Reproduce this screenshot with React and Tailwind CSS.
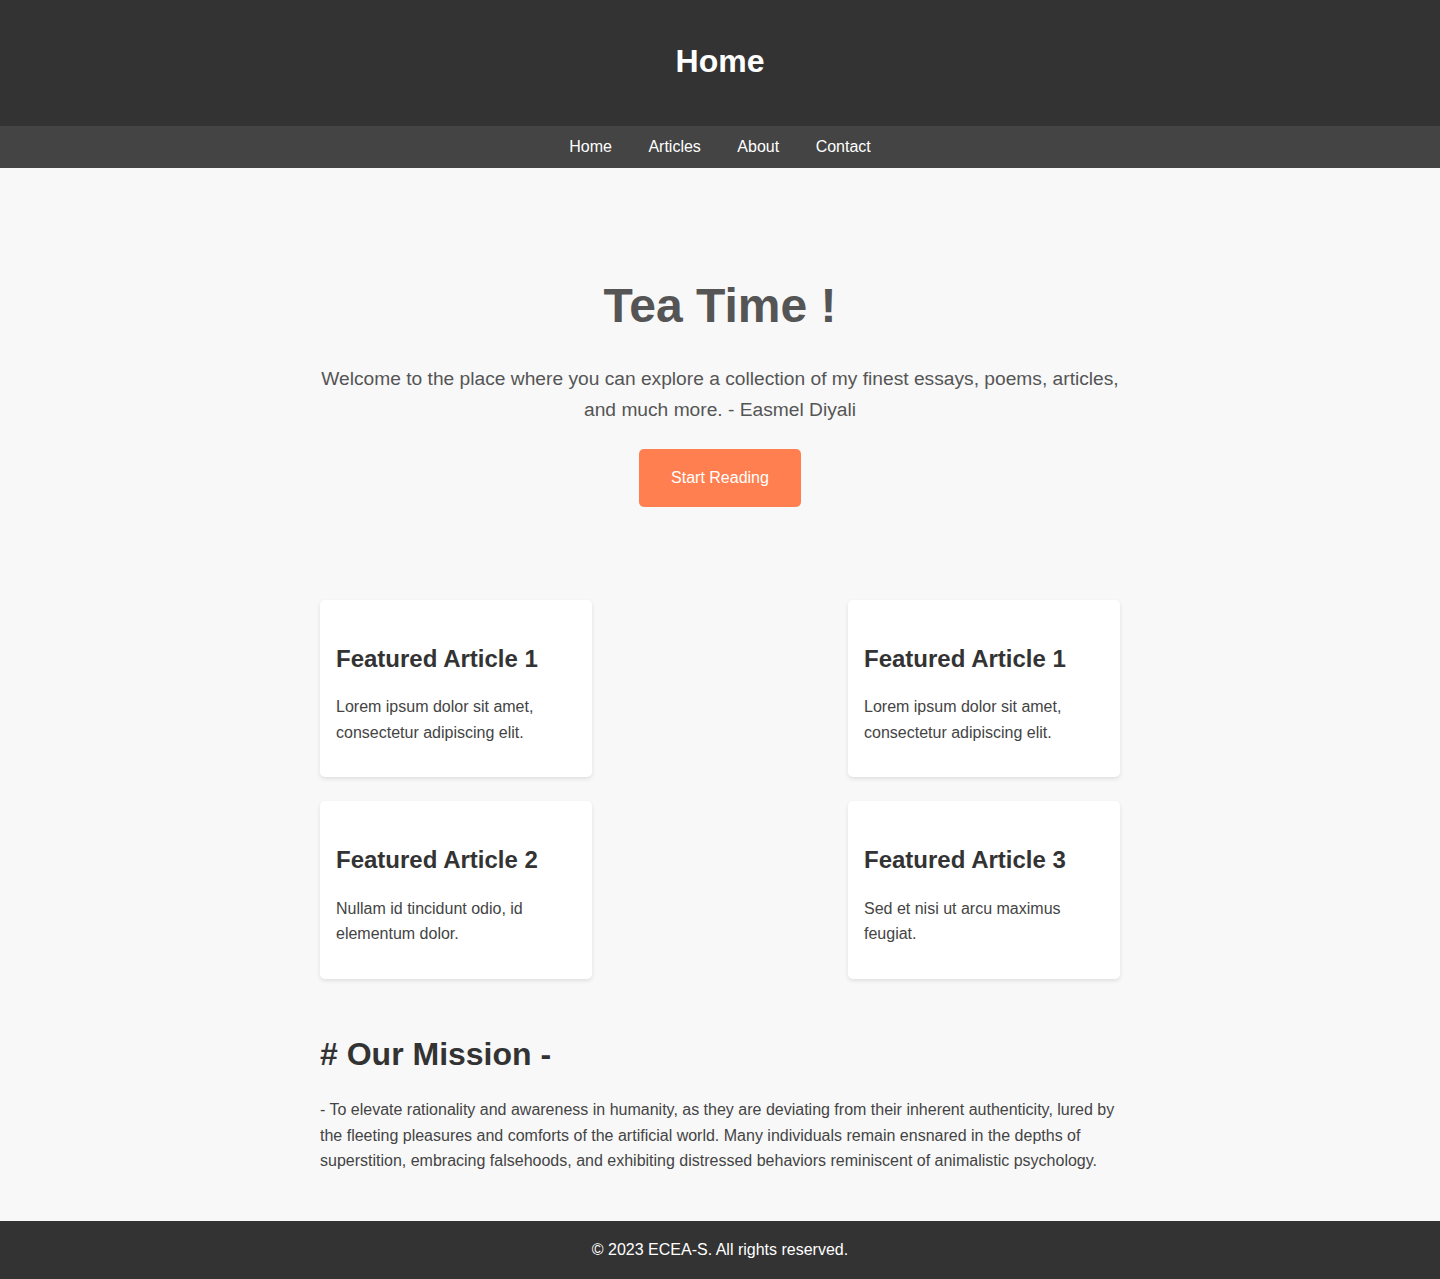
import React from 'react';

const navLinks = ['Home', 'Articles', 'About', 'Contact'];

const articles = [
  [
    { title: 'Featured Article 1', text: 'Lorem ipsum dolor sit amet, consectetur adipiscing elit.' },
    { title: 'Featured Article 1', text: 'Lorem ipsum dolor sit amet, consectetur adipiscing elit.' },
  ],
  [
    { title: 'Featured Article 2', text: 'Nullam id tincidunt odio, id elementum dolor.' },
    { title: 'Featured Article 3', text: 'Sed et nisi ut arcu maximus feugiat.' },
  ],
];

const ArticleCard = ({ title, text }) => (
  <div className="w-[272px] bg-white rounded-[5px] shadow-[0_2px_4px_rgba(0,0,0,0.1)] px-4 pt-4 pb-8">
    <h3 className="mt-6 text-2xl leading-[38.4px] font-bold text-[#333]">{title}</h3>
    <p className="mt-4 text-base leading-[25.6px] text-[#444]">{text}</p>
  </div>
);

const App = () => {
  return (
    <div className="min-h-screen bg-[#f8f8f8] font-['Liberation_Sans',Arial,sans-serif]">
      <header className="bg-[#333] pt-[36px] pb-[39px] text-center">
        <h1 className="text-[32px] leading-[51.2px] font-bold text-white">Home</h1>
      </header>
      <nav className="bg-[#444] py-2 flex justify-center gap-[36.5px]">
        {navLinks.map((link) => (
          <a key={link} href="#" className="text-base leading-[25.6px] text-white">
            {link}
          </a>
        ))}
      </nav>
      <section className="pt-[100px] text-center">
        <h1 className="text-[48px] leading-[76.8px] font-bold text-[#555]">Tea Time !</h1>
        <p className="mt-[18px] mx-auto max-w-[800px] text-[19.2px] leading-[31px] text-[#555]">
          Welcome to the place where you can explore a collection of my finest essays, poems, articles, and much more. - Easmel Diyali
        </p>
        <a
          href="#"
          className="inline-block mt-[24px] px-8 py-4 rounded-[5px] bg-[#ff7f50] text-white text-base leading-[26px]"
        >
          Start Reading
        </a>
      </section>
      <section className="w-[800px] mx-auto mt-[93px] flex flex-col gap-6">
        {articles.map((row, i) => (
          <div key={i} className="flex justify-between">
            {row.map((a, j) => (
              <ArticleCard key={j} title={a.title} text={a.text} />
            ))}
          </div>
        ))}
      </section>
      <section className="w-[800px] mx-auto mt-[50px] pb-[47px]">
        <h2 className="text-[32px] leading-[51.2px] font-bold text-[#333]"># Our Mission -</h2>
        <p className="mt-[17px] text-base leading-[25.6px] text-[#444]">
          - To elevate rationality and awareness in humanity, as they are deviating from their inherent authenticity, lured by the fleeting pleasures and comforts of the artificial world. Many individuals remain ensnared in the depths of superstition, embracing falsehoods, and exhibiting distressed behaviors reminiscent of animalistic psychology.
        </p>
      </section>
      <footer className="bg-[#333] py-4 text-center text-white text-base leading-[26px]">
        © 2023 ECEA-S. All rights reserved.
      </footer>
    </div>
  );
};

export default App;
